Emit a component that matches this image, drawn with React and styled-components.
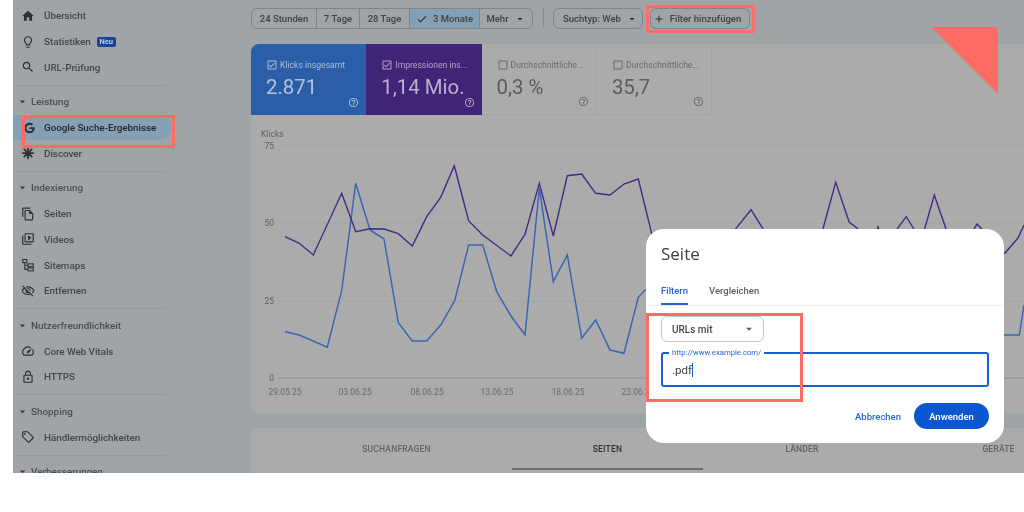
import React from "react";
import styled, { createGlobalStyle } from "styled-components";
import {
  MdHome, MdOutlineLightbulb, MdSearch, MdOutlineFileCopy, MdOutlineVideoLibrary,
  MdOutlineVisibilityOff, MdOutlineSpeed, MdOutlineLock, MdOutlineLocalOffer,
  MdCheck, MdOutlineCheckBox, MdCheckBoxOutlineBlank, MdHelpOutline, MdAdd, MdArrowDropDown,
} from "react-icons/md";
import { FaGoogle } from "react-icons/fa";

const Global = createGlobalStyle`
  html, body { margin: 0; padding: 0; background: #fff; }
  body { width: 1024px; height: 512px; overflow: hidden; font-family: Roboto, "Liberation Sans", sans-serif; }
`;

const Page = styled.div`
  position: relative;
  width: 1024px;
  height: 512px;
  overflow: hidden;
  background: #fff;
  filter: blur(0.3px);
`;
const Frame = styled.div`
  margin-left: 13px;
  width: 1011px;
  height: 473px;
  background: #9fa4a7;
  display: flex;
  overflow: hidden;
`;
const Sidebar = styled.nav`
  width: 238px;
  flex: none;
  padding-top: 3px;
`;
const Section = styled.div`
  width: 159px;
  padding-bottom: 5.5px;
  margin-bottom: 3.5px;
  position: relative;
  &::after {
    content: "";
    position: absolute;
    left: 3px;
    width: 151px;
    bottom: 0;
    height: 1px;
    background: #969a9d;
  }
`;
const NavRow = styled.div`
  height: 25.7px;
  display: flex;
  align-items: center;
  padding-left: 8px;
  gap: 9px;
  font-size: 9.9px;
  font-weight: 500;
  letter-spacing: -0.05px;
  color: ${(p) => (p.$active ? "#26292c" : "#44474a")};
  background: ${(p) => (p.$active ? "#85a0b4" : "transparent")};
  border-radius: ${(p) => (p.$active ? "0 13px 13px 0" : "0")};
  svg { width: 14px; height: 14px; flex: none; color: #2e3134; }
`;
const GoogleMark = styled(FaGoogle)`
  box-sizing: border-box;
  padding: 1.5px 0 1.5px 3px;
`;
const SectionHead = styled.div`
  height: 25.7px;
  display: flex;
  align-items: center;
  padding-left: 3px;
  gap: 2px;
  font-size: 9.9px;
  font-weight: 500;
  color: #4b4e51;
  svg { width: 13px; height: 13px; color: #3a3d40; }
`;
const NewBadge = styled.span`
  margin-left: -3px;
  background: #17449c;
  color: #b8c8e4;
  font-size: 7.5px;
  line-height: 9px;
  font-weight: 700;
  padding: 0.5px 3px;
  border-radius: 2px;
`;
const Main = styled.main`
  flex: 1;
  min-width: 0;
`;
const Toolbar = styled.div`
  height: 44px;
  padding-top: 8px;
  box-sizing: border-box;
  display: flex;
  align-items: flex-start;
`;
const ChipGroup = styled.div`
  display: flex;
  height: 21px;
  border: 1px solid #80858a;
  border-radius: 6px;
  overflow: hidden;
  box-sizing: border-box;
`;
const Chip = styled.div`
  width: ${(p) => p.$w}px;
  box-sizing: border-box;
  display: flex;
  align-items: center;
  justify-content: center;
  gap: 5px;
  font-size: 9.5px;
  font-weight: 500;
  color: #3f4245;
  background: ${(p) => (p.$on ? "#85a0b4" : "transparent")};
  & + & { border-left: 1px solid #80858a; }
  svg { width: 12px; height: 12px; color: #2c2f32; flex: none; }
`;
const ToolDivider = styled.div`
  width: 1px;
  height: 20px;
  margin: 0 9.5px;
  background: #878b8f;
`;
const SoloChip = styled.div`
  width: ${(p) => p.$w}px;
  height: 21px;
  margin-right: ${(p) => p.$mr || 0}px;
  padding-left: ${(p) => p.$pl || 0}px;
  padding-right: ${(p) => p.$pr || 0}px;
  box-sizing: border-box;
  border: 1px solid #80858a;
  border-radius: 6px;
  display: flex;
  align-items: center;
  justify-content: center;
  gap: 5px;
  font-size: 9.5px;
  font-weight: 500;
  color: #3f4245;
  svg { width: 12px; height: 12px; color: #2c2f32; flex: none; }
`;
const ChartCard = styled.section`
  width: 790px;
  height: 369px;
  background: #ababab;
  border-radius: 8px 0 0 8px;
  overflow: hidden;
`;
const Metrics = styled.div`
  display: flex;
  height: 71px;
`;
const Metric = styled.div`
  width: 115.3px;
  box-sizing: border-box;
  padding: 14px 9px 0 15px;
  position: relative;
  background: ${(p) => p.$bg || "transparent"};
  color: ${(p) => p.$fg || "#6b6b6b"};
  border-right: ${(p) => (p.$bg ? "0" : "1px solid #a3a3a3")};
  border-bottom: ${(p) => (p.$bg ? "0" : "1px solid #a3a3a3")};
`;
const MetricLabel = styled.div`
  display: flex;
  align-items: center;
  gap: 2px;
  font-size: 8.6px;
  white-space: nowrap;
  height: 13px;
  svg { width: 12px; height: 12px; flex: none; }
`;
const MetricValue = styled.div`
  font-size: 20.4px;
  line-height: 24px;
  margin-top: 4px;
  color: ${(p) => p.$fg || "#5c5c5c"};
  white-space: nowrap;
`;
const HelpIcon = styled(MdHelpOutline)`
  position: absolute;
  right: 7px;
  bottom: 7px;
  width: 11px;
  height: 11px;
`;
const Chart = styled.svg`
  display: block;
  width: 773px;
  height: 298px;
`;
const TabsCard = styled.section`
  margin-top: 15px;
  width: 790px;
  height: 60px;
  background: #ababab;
  border-radius: 8px 0 0 0;
  display: grid;
  grid-template-columns: 261px 191px 198px 195px;
  box-sizing: border-box;
  box-shadow: inset 0 -4px 0 -3px #a1a1a1;
`;
const ResultTab = styled.div`
  height: 38px;
  padding-top: 2px;
  padding-left: ${(p) => p.$pl || 0}px;
  display: flex;
  align-items: center;
  justify-content: center;
  font-size: 8.5px;
  font-weight: 500;
  letter-spacing: 0.2px;
  color: ${(p) => (p.$on ? "#2f3133" : "#636363")};
  border-bottom: ${(p) => (p.$on ? "2px solid #6a6a6a" : "2px solid transparent")};
`;
const Modal = styled.div`
  position: absolute;
  left: 646px;
  top: 229px;
  width: 358px;
  height: 214px;
  background: #fff;
  border-radius: 18px;
  box-sizing: border-box;
  padding-top: 15px;
`;
const ModalTitle = styled.h2`
  margin: 0 0 0 15px;
  font-size: 17px;
  line-height: 20px;
  font-weight: 400;
  color: #3c4043;
  font-family: "Open Sans", Roboto, sans-serif;
`;
const ModalTabs = styled.div`
  display: flex;
  margin-top: 14px;
  padding-left: 15px;
  gap: 21px;
  height: 27px;
  border-bottom: 1px solid #eceef0;
`;
const ModalTab = styled.div`
  height: 27px;
  box-sizing: border-box;
  padding-top: 7px;
  font-size: 9.5px;
  font-weight: 500;
  color: ${(p) => (p.$on ? "#2b63d6" : "#5a5e62")};
  border-bottom: ${(p) => (p.$on ? "2px solid #2b63d6" : "0")};
`;
const Select = styled.div`
  width: 103px;
  height: 26px;
  margin: 10px 0 0 15px;
  box-sizing: border-box;
  border: 1px solid #c4c6c8;
  border-radius: 6px;
  display: flex;
  align-items: center;
  justify-content: space-between;
  padding: 0 7px 0 10px;
  font-size: 10px;
  font-weight: 500;
  color: #44474a;
  svg { width: 14px; height: 14px; color: #55585b; }
`;
const Field = styled.div`
  position: relative;
  width: 328px;
  height: 35px;
  margin: 10px 0 0 15px;
  box-sizing: border-box;
  border: 2px solid #1a5fd0;
  border-radius: 3px;
  display: flex;
  align-items: center;
  padding-left: 9px;
`;
const FieldLabel = styled.span`
  position: absolute;
  left: 6px;
  top: -6px;
  padding: 0 3px;
  background: #fff;
  font-size: 7.7px;
  line-height: 9px;
  color: #2b63d6;
`;
const FieldText = styled.span`
  font-size: 11.5px;
  color: #3c4043;
  border-right: 1px solid #1a5fd0;
  line-height: 14px;
`;
const Actions = styled.div`
  display: flex;
  justify-content: flex-end;
  align-items: center;
  gap: 13px;
  margin: 16px 15px 0 0;
`;
const TextButton = styled.div`
  font-size: 9.5px;
  font-weight: 500;
  color: #2b63d6;
`;
const PrimaryButton = styled.div`
  width: 75px;
  height: 26px;
  border-radius: 13px;
  background: #0b57d0;
  color: #fff;
  font-size: 9.5px;
  font-weight: 500;
  display: flex;
  align-items: center;
  justify-content: center;
`;
const Mark = styled.div`
  position: absolute;
  left: ${(p) => p.$x}px;
  top: ${(p) => p.$y}px;
  width: ${(p) => p.$w}px;
  height: ${(p) => p.$h}px;
  box-sizing: border-box;
  border: 3.5px solid #ff6b66;
`;
const Triangle = styled.svg`
  position: absolute;
  left: 931px;
  top: 27px;
  width: 67px;
  height: 67px;
`;

const DiscoverIcon = () => (
  <svg viewBox="0 0 24 24" fill="none" stroke="currentColor" strokeWidth="3" strokeLinecap="round">
    <path d="M12 3v18M3 12h18M5.6 5.6l12.8 12.8M18.4 5.6L5.6 18.4" />
  </svg>
);
const SitemapIcon = () => (
  <svg viewBox="0 0 24 24" fill="none" stroke="currentColor" strokeWidth="1.9">
    <rect x="3" y="2.5" width="7" height="5.5" />
    <rect x="12" y="10" width="9" height="5" />
    <rect x="12" y="17" width="9" height="5" />
    <path d="M6.5 8v11.5H12M6.5 12.5H12" />
  </svg>
);

const purple = "285,236.7 299.3,243.3 313.3,255 341.7,193.3 355.7,231.7 370,228.7 384,229 398.3,233.7 412.3,246 426.7,216.7 440.7,197.3 454.3,165.7 468.7,221 482.7,235 511,256 525,234.3 539.3,183.3 553.3,236 567.3,175.7 581.7,174 595.7,193.3 610,195 624,184 638.3,179 650,226.7 654,245 725,245 736,228.3 751,209.7 762.7,228.3 770,245 815,245 823.3,227.7 835.7,182.3 849.3,222.3 857.3,228.3 864,245 872,245 878,227 884,245 885,245 906.3,216.7 913.3,228 920,245 934.3,195 945.7,228 952,245 965,245 977,224 981.7,229 990,245 1005,253 1018,238 1024,225";
const blue = "285,331.7 299.3,335 327.3,347.3 341.7,290.7 355.7,183.3 370,230 384,239 398.3,322.7 412.3,341 426.7,341 440.7,325 454.7,300.7 468.7,245 482.7,245 496.7,291.7 511,316 525,335 539.3,188.3 553.3,281.7 567.3,255 581.7,338.3 595.7,320 610,350 624,353.3 638.3,297.3 645,290 700,300 1005,335 1019.3,335 1024,305";

const dates = [[285, "29.05.25"], [355, "03.06.25"], [427, "08.06.25"], [497, "13.06.25"], [568, "18.06.25"], [638, "23.06.25"]];
const grid = [[146, "75"], [223, "50"], [301, "25"]];

const sections = [
  { items: [[MdHome, "Übersicht"], [MdOutlineLightbulb, "Statistiken", true], [MdSearch, "URL-Prüfung"]] },
  { head: "Leistung", items: [[GoogleMark, "Google Suche-Ergebnisse", false, true], [DiscoverIcon, "Discover"]] },
  { head: "Indexierung", items: [[MdOutlineFileCopy, "Seiten"], [MdOutlineVideoLibrary, "Videos"], [SitemapIcon, "Sitemaps"], [MdOutlineVisibilityOff, "Entfernen"]] },
  { head: "Nutzerfreundlichkeit", items: [[MdOutlineSpeed, "Core Web Vitals"], [MdOutlineLock, "HTTPS"]] },
  { head: "Shopping", items: [[MdOutlineLocalOffer, "Händlermöglichkeiten"]] },
  { head: "Verbesserungen", items: [] },
];

export default function App() {
  return (
    <Page>
      <Global />
      <Frame>
        <Sidebar>
          {sections.map((s, i) => (
            <Section key={i}>
              {s.head && <SectionHead><MdArrowDropDown />{s.head}</SectionHead>}
              {s.items.map(([Icon, label, badge, active]) => (
                <NavRow key={label} $active={active}>
                  <Icon />
                  {label}
                  {badge && <NewBadge>Neu</NewBadge>}
                </NavRow>
              ))}
            </Section>
          ))}
        </Sidebar>
        <Main>
          <Toolbar>
            <ChipGroup>
              <Chip $w={64}>24 Stunden</Chip>
              <Chip $w={43}>7 Tage</Chip>
              <Chip $w={50}>28 Tage</Chip>
              <Chip $w={70} $on><MdCheck />3 Monate</Chip>
              <Chip $w={53}>Mehr<MdArrowDropDown /></Chip>
            </ChipGroup>
            <ToolDivider />
            <SoloChip $w={90} $mr={7} $pl={5}>Suchtyp: Web<MdArrowDropDown /></SoloChip>
            <SoloChip $w={100} $pr={6}><MdAdd />Filter hinzufügen</SoloChip>
          </Toolbar>
          <ChartCard>
            <Metrics>
              <Metric $bg="#2a5ea8" $fg="#a9bcd6">
                <MetricLabel><MdOutlineCheckBox />Klicks insgesamt</MetricLabel>
                <MetricValue $fg="#b4c3da">2.871</MetricValue>
                <HelpIcon />
              </Metric>
              <Metric $bg="#402478" $fg="#aea5c6">
                <MetricLabel><MdOutlineCheckBox />Impressionen ins...</MetricLabel>
                <MetricValue $fg="#b9b2cf">1,14 Mio.</MetricValue>
                <HelpIcon />
              </Metric>
              <Metric>
                <MetricLabel><MdCheckBoxOutlineBlank />Durchschnittliche...</MetricLabel>
                <MetricValue>0,3 %</MetricValue>
                <HelpIcon />
              </Metric>
              <Metric>
                <MetricLabel><MdCheckBoxOutlineBlank />Durchschnittliche...</MetricLabel>
                <MetricValue>35,7</MetricValue>
                <HelpIcon />
              </Metric>
            </Metrics>
            <Chart viewBox="251 115 773 298">
              <text x="261" y="137" fontSize="8.5" fill="#5f5f5f" fontFamily="Roboto">Klicks</text>
              {grid.map(([y, l]) => (
                <g key={l}>
                  <line x1="278" x2="1024" y1={y} y2={y} stroke="#a4a4a4" />
                  <text x="274" y={y + 3} textAnchor="end" fontSize="8.5" fill="#5f5f5f" fontFamily="Roboto">{l}</text>
                </g>
              ))}
              <line x1="278" x2="1024" y1="378" y2="378" stroke="#8e8e8e" />
              <text x="274" y="381" textAnchor="end" fontSize="8.5" fill="#5f5f5f" fontFamily="Roboto">0</text>
              {dates.map(([x, l]) => (
                <text key={l} x={x} y="395" textAnchor="middle" fontSize="8.5" fill="#6a6a6a" fontFamily="Roboto">{l}</text>
              ))}
              <polyline points={blue} fill="none" stroke="#3a66b5" strokeWidth="1.5" />
              <polyline points={purple} fill="none" stroke="#452a86" strokeWidth="1.4" />
            </Chart>
          </ChartCard>
          <TabsCard>
            <ResultTab $pl={30}>SUCHANFRAGEN</ResultTab>
            <ResultTab $on>SEITEN</ResultTab>
            <ResultTab>LÄNDER</ResultTab>
            <ResultTab>GERÄTE</ResultTab>
          </TabsCard>
        </Main>
      </Frame>
      <Mark $x={22} $y={115} $w={153} $h={33} />
      <Mark $x={646} $y={5} $w={109} $h={28} />
      <Triangle viewBox="0 0 67 67"><polygon points="0,0 67,0 67,67" fill="#ff6b66" /></Triangle>
      <Modal>
        <ModalTitle>Seite</ModalTitle>
        <ModalTabs>
          <ModalTab $on>Filtern</ModalTab>
          <ModalTab>Vergleichen</ModalTab>
        </ModalTabs>
        <Select>URLs mit<MdArrowDropDown /></Select>
        <Field>
          <FieldLabel>http://www.example.com/</FieldLabel>
          <FieldText>.pdf</FieldText>
        </Field>
        <Actions>
          <TextButton>Abbrechen</TextButton>
          <PrimaryButton>Anwenden</PrimaryButton>
        </Actions>
      </Modal>
      <Mark $x={646} $y={313} $w={157} $h={89} />
    </Page>
  );
}
